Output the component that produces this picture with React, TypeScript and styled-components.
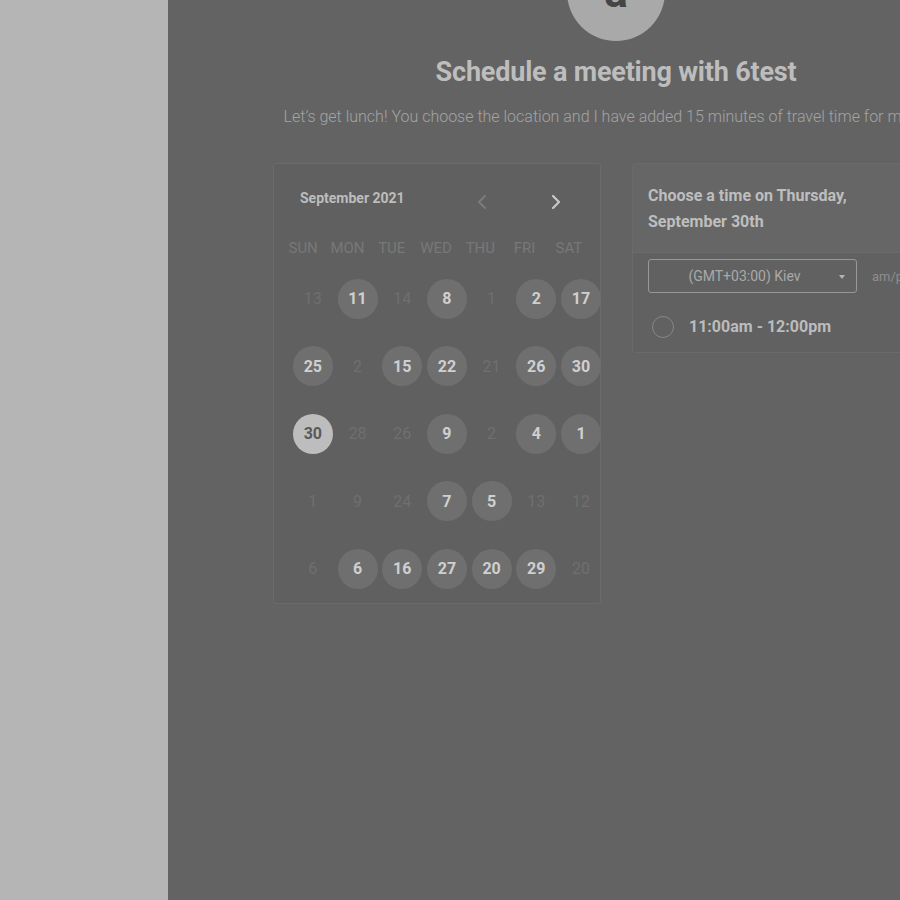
import React from "react";
import styled, { createGlobalStyle } from "styled-components";

const Global = createGlobalStyle`
  html, body { margin: 0; padding: 0; overflow: hidden; background: #636363; }
  body { font-family: Roboto, "Liberation Sans", sans-serif; }
`;

const Page = styled.div`
  display: flex;
  width: 900px;
  height: 900px;
  overflow: hidden;
`;

const Sidebar = styled.div`
  flex: 0 0 168px;
  background: #b5b5b5;
`;

const Main = styled.main`
  flex: 0 0 896px;
  background: #636363;
  display: flex;
  flex-direction: column;
  align-items: center;
`;

const Avatar = styled.div`
  width: 98px;
  height: 98px;
  margin-top: -57px;
  border-radius: 50%;
  background: #a9a9a9;
  display: flex;
  align-items: center;
  justify-content: center;
  color: #454545;
  font: 700 44px Roboto, sans-serif;
`;

const Title = styled.h1`
  margin: 15px 0 0;
  font: 700 27px/32px Roboto, sans-serif;
  color: #bdbdbd;
  letter-spacing: -0.2px;
`;

const Subtitle = styled.p`
  margin: 19px 0 0;
  font: 300 16px/20px Roboto, sans-serif;
  color: #a3a3a3;
  white-space: nowrap;
`;

const Cards = styled.div`
  display: flex;
  gap: 31px;
  margin-top: 36px;
  align-items: flex-start;
`;

const CalendarCard = styled.section`
  width: 328px;
  height: 441px;
  box-sizing: border-box;
  background: #606060;
  border: 1px solid #6b6b6b;
  border-radius: 3px;
`;

const CalHeader = styled.div`
  display: flex;
  align-items: center;
  height: 68px;
  padding: 0 0 0 26px;
`;

const Month = styled.div`
  flex: 0 0 154px;
  font: 700 14px Roboto, sans-serif;
  color: #bdbdbd;
  white-space: nowrap;
`;

const Arrow = styled.div<{ $on?: boolean; $gap: number }>`
  flex: 0 0 20px;
  display: flex;
  justify-content: center;
  margin-left: ${(p) => p.$gap}px;
  margin-top: 8px;
  color: ${(p) => (p.$on ? "#c8c8c8" : "#7a7a7a")};
`;

const Weekdays = styled.div`
  display: grid;
  grid-template-columns: repeat(7, 44.3px);
  padding-left: 7px;
  height: 32px;
  align-items: center;
`;

const Weekday = styled.div`
  text-align: center;
  font: 400 15px Roboto, sans-serif;
  color: #787878;
`;

const Days = styled.div`
  display: grid;
  grid-template-columns: repeat(7, 44.7px);
  grid-auto-rows: 67.5px;
  padding-left: 16.5px;
  margin-top: 1px;
`;

const Day = styled.div`
  display: flex;
  align-items: center;
  justify-content: center;
`;

const DayCircle = styled.div<{ $state: "dim" | "on" | "sel" }>`
  width: 40px;
  height: 40px;
  border-radius: 50%;
  display: flex;
  align-items: center;
  justify-content: center;
  font: ${(p) => (p.$state === "dim" ? 400 : 700)} 16px Roboto, sans-serif;
  background: ${(p) =>
    p.$state === "sel" ? "#bdbdbd" : p.$state === "on" ? "#6f6f6f" : "transparent"};
  color: ${(p) =>
    p.$state === "sel" ? "#5a5a5a" : p.$state === "on" ? "#cfcfcf" : "#6f6f6f"};
`;

const TimeCard = styled.section`
  width: 327px;
  box-sizing: border-box;
  background: #616161;
  border: 1px solid #6a6a6a;
  border-radius: 3px;
`;

const TimeHeader = styled.div`
  background: #666666;
  border-bottom: 1px solid #6b6b6b;
  padding: 19px 16px 17px 15px;
  font: 700 16px/26px Roboto, sans-serif;
  color: #bebebe;
`;

const TimeBody = styled.div`
  padding: 6px 0 0 15px;
`;

const ZoneRow = styled.div`
  display: flex;
  align-items: center;
  gap: 15px;
`;

const Select = styled.div`
  width: 209px;
  height: 34px;
  box-sizing: border-box;
  border: 1px solid #979797;
  border-radius: 3px;
  display: flex;
  align-items: center;
  justify-content: center;
  padding-right: 16px;
  position: relative;
  font: 400 14px Roboto, sans-serif;
  color: #a9a9a9;
`;

const Caret = styled.span`
  position: absolute;
  right: 11px;
  top: 15px;
  width: 0;
  height: 0;
  border-left: 3.5px solid transparent;
  border-right: 3.5px solid transparent;
  border-top: 4px solid #b5b5b5;
`;

const AmPm = styled.span`
  font: 400 13px Roboto, sans-serif;
  color: #8e8e8e;
  white-space: nowrap;
`;

const Slot = styled.div`
  display: flex;
  align-items: center;
  gap: 15px;
  height: 59px;
  padding: 8px 0 0 4px;
  box-sizing: border-box;
`;

const Radio = styled.span`
  width: 22px;
  height: 22px;
  box-sizing: border-box;
  border: 1.5px solid #878787;
  border-radius: 50%;
`;

const SlotLabel = styled.span`
  font: 700 16px Roboto, sans-serif;
  color: #bcbcbc;
`;

type S = "dim" | "on" | "sel";
const rows: [string, S][][] = [
  [["13", "dim"], ["11", "on"], ["14", "dim"], ["8", "on"], ["1", "dim"], ["2", "on"], ["17", "on"]],
  [["25", "on"], ["2", "dim"], ["15", "on"], ["22", "on"], ["21", "dim"], ["26", "on"], ["30", "on"]],
  [["30", "sel"], ["28", "dim"], ["26", "dim"], ["9", "on"], ["2", "dim"], ["4", "on"], ["1", "on"]],
  [["1", "dim"], ["9", "dim"], ["24", "dim"], ["7", "on"], ["5", "on"], ["13", "dim"], ["12", "dim"]],
  [["6", "dim"], ["6", "on"], ["16", "on"], ["27", "on"], ["20", "on"], ["29", "on"], ["20", "dim"]],
];

const Chevron = ({ dir }: { dir: "l" | "r" }) => (
  <svg width="10" height="16" viewBox="0 0 10 16">
    <path
      d={dir === "l" ? "M8 2 L2 8 L8 14" : "M2 2 L8 8 L2 14"}
      fill="none"
      stroke="currentColor"
      strokeWidth="2.2"
      strokeLinecap="round"
      strokeLinejoin="round"
    />
  </svg>
);

export default function App() {
  return (
    <>
      <Global />
      <Page>
        <Sidebar />
        <Main>
          <Avatar>a</Avatar>
          <Title>Schedule a meeting with 6test</Title>
          <Subtitle>
            Let’s get lunch! You choose the location and I have added 15 minutes of travel time for meeting.
          </Subtitle>
          <Cards>
            <CalendarCard>
              <CalHeader>
                <Month>September 2021</Month>
                <Arrow $gap={18}>
                  <Chevron dir="l" />
                </Arrow>
                <Arrow $on $gap={54}>
                  <Chevron dir="r" />
                </Arrow>
              </CalHeader>
              <Weekdays>
                {["SUN", "MON", "TUE", "WED", "THU", "FRI", "SAT"].map((d) => (
                  <Weekday key={d}>{d}</Weekday>
                ))}
              </Weekdays>
              <Days>
                {rows.flatMap((r, ri) =>
                  r.map(([n, s], ci) => (
                    <Day key={`${ri}-${ci}`}>
                      <DayCircle $state={s}>{n}</DayCircle>
                    </Day>
                  ))
                )}
              </Days>
            </CalendarCard>
            <TimeCard>
              <TimeHeader>
                Choose a time on Thursday,
                <br />
                September 30th
              </TimeHeader>
              <TimeBody>
                <ZoneRow>
                  <Select>
                    (GMT+03:00) Kiev
                    <Caret />
                  </Select>
                  <AmPm>am/pm</AmPm>
                </ZoneRow>
                <Slot>
                  <Radio />
                  <SlotLabel>11:00am - 12:00pm</SlotLabel>
                </Slot>
              </TimeBody>
            </TimeCard>
          </Cards>
        </Main>
      </Page>
    </>
  );
}
